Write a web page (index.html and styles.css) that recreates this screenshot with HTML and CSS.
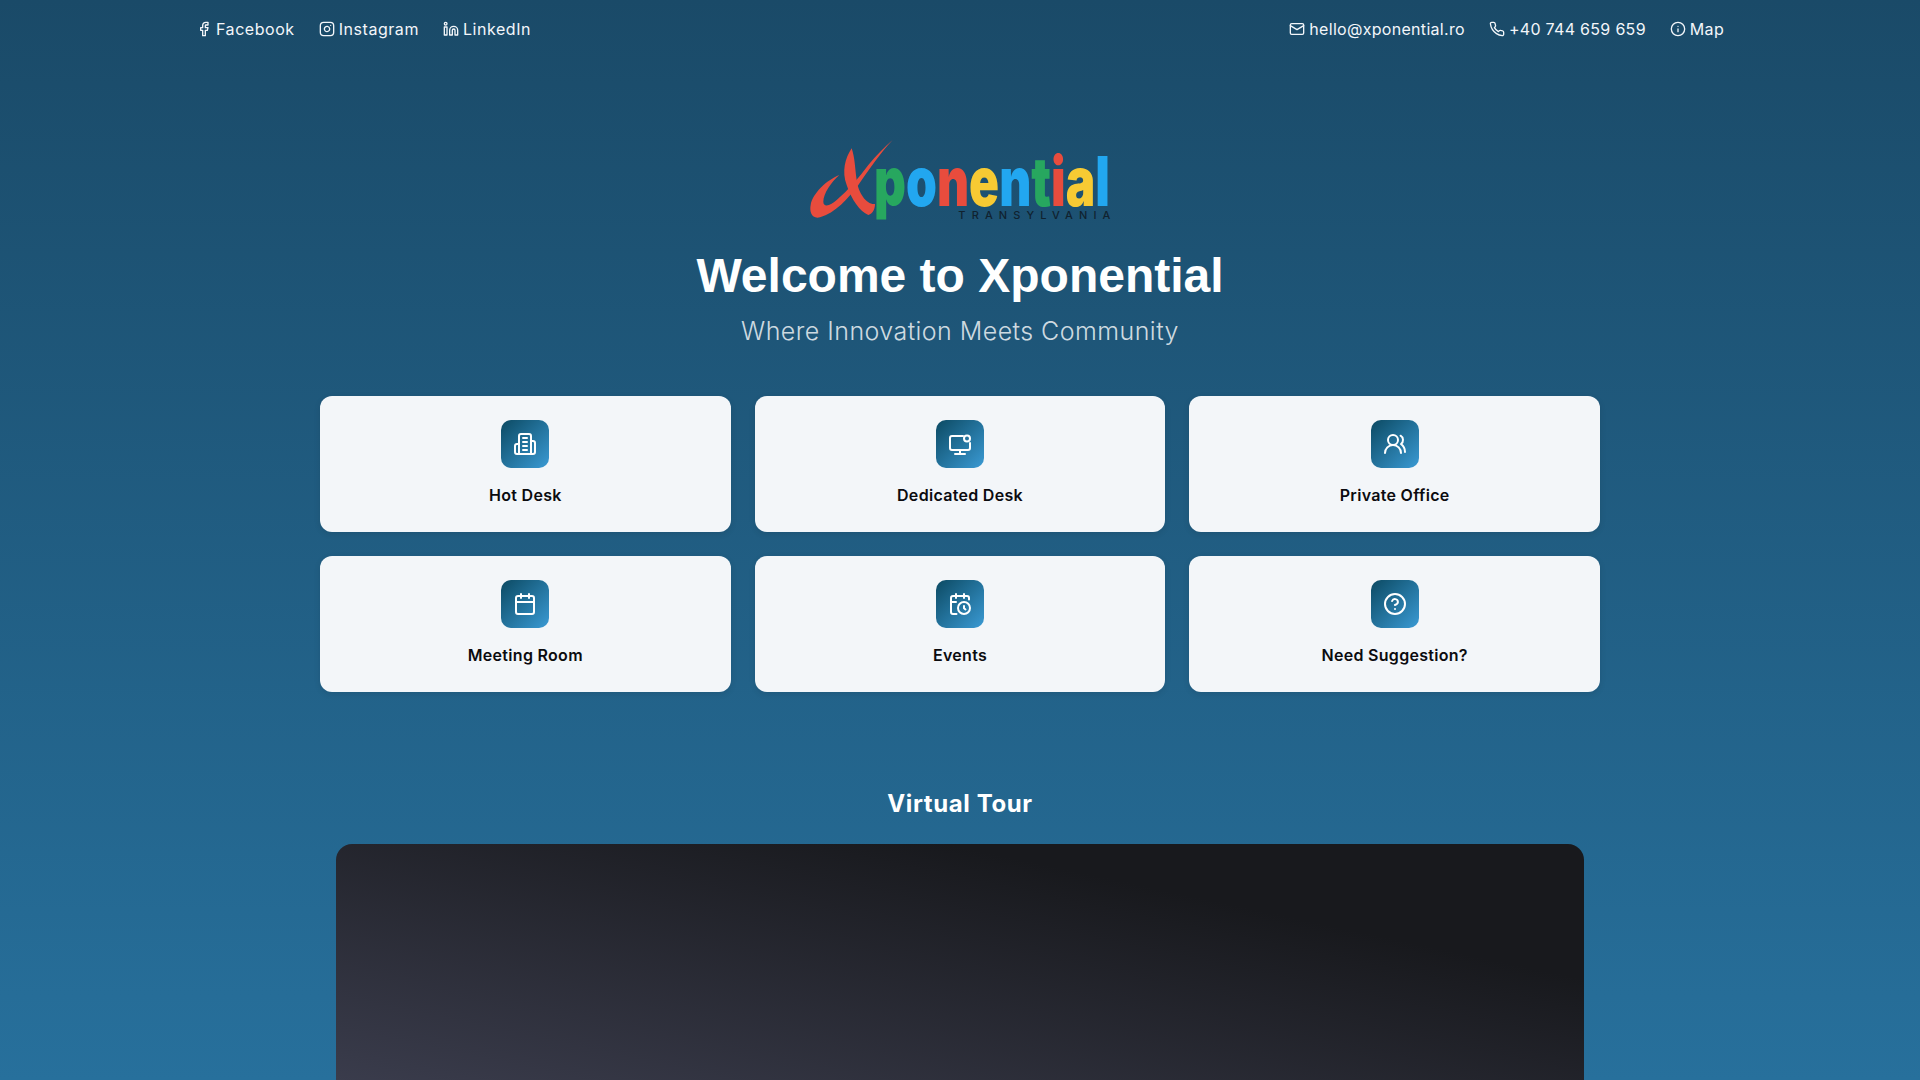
FILE: index.html
```html
<!DOCTYPE html>
<html lang="en">
<head>
    <meta charset="UTF-8">
    <meta name="viewport" content="width=device-width, initial-scale=1.0">
    <title>Xponential Transylvania</title>
    <link rel="stylesheet" href="styles.css">
</head>
<body>
    <header class="topbar">
        <nav class="topbar-group topbar-social">
            <a class="toplink" href="#">
                <svg class="toplink-icon" viewBox="0 0 24 24"><path d="M18 2h-3a5 5 0 0 0-5 5v3H7v4h3v8h4v-8h3l1-4h-4V7a1 1 0 0 1 1-1h3z"/></svg>
                Facebook
            </a>
            <a class="toplink" href="#">
                <svg class="toplink-icon" viewBox="0 0 24 24"><rect x="2" y="2" width="20" height="20" rx="5"/><path d="M16 11.4A4 4 0 1 1 12.6 8 4 4 0 0 1 16 11.4z"/><path d="M17.5 6.5h.01"/></svg>
                Instagram
            </a>
            <a class="toplink" href="#">
                <svg class="toplink-icon" viewBox="0 0 24 24"><path d="M16 8a6 6 0 0 1 6 6v7h-4v-7a2 2 0 0 0-4 0v7h-4v-7a6 6 0 0 1 6-6z"/><rect x="2" y="9" width="4" height="12"/><circle cx="4" cy="4" r="2"/></svg>
                LinkedIn
            </a>
        </nav>
        <nav class="topbar-group">
            <a class="toplink" href="#">
                <svg class="toplink-icon" viewBox="0 0 24 24"><rect x="2" y="4" width="20" height="16" rx="2"/><path d="m22 7-10 6L2 7"/></svg>
                hello@xponential.ro
            </a>
            <a class="toplink" href="#">
                <svg class="toplink-icon" viewBox="0 0 24 24"><path d="M22 16.9v3a2 2 0 0 1-2.2 2 19.8 19.8 0 0 1-8.6-3 19.5 19.5 0 0 1-6-6 19.8 19.8 0 0 1-3.1-8.7A2 2 0 0 1 4.1 2h3a2 2 0 0 1 2 1.7c.1 1 .4 1.9.7 2.8a2 2 0 0 1-.5 2.1L8.1 9.9a16 16 0 0 0 6 6l1.3-1.3a2 2 0 0 1 2.1-.4c.9.3 1.8.6 2.8.7a2 2 0 0 1 1.7 2z"/></svg>
                +40 744 659 659
            </a>
            <a class="toplink" href="#">
                <svg class="toplink-icon" viewBox="0 0 24 24"><circle cx="12" cy="12" r="10"/><path d="M12 16v-4"/><path d="M12 8h.01"/></svg>
                Map
            </a>
        </nav>
    </header>

    <main class="main">
        <section class="hero">
            <svg class="logo" viewBox="0 0 1020 300" role="img" aria-label="Xponential Transylvania">
                <path class="logo-x" d="M308 30C270 70 240 115 205 165C175 205 135 250 90 262C65 268 58 245 62 225C68 190 110 150 148 135C125 155 100 190 100 215C100 235 125 225 140 210C175 180 205 145 235 105C260 75 285 50 308 30Z"/>
                <path class="logo-x" d="M185 55C165 85 155 125 170 165C185 210 210 245 235 255C250 250 255 235 255 222C230 225 205 190 200 150C195 115 195 85 185 55Z"/>
                <text class="logo-word" x="252" y="227" textLength="708" lengthAdjust="spacingAndGlyphs"><tspan class="logo-green">p</tspan><tspan class="logo-blue">o</tspan><tspan class="logo-red">n</tspan><tspan class="logo-yellow">e</tspan><tspan class="logo-blue">n</tspan><tspan class="logo-green">t</tspan><tspan class="logo-red">i</tspan><tspan class="logo-yellow">a</tspan><tspan class="logo-blue">l</tspan></text>
                <text class="logo-sub" x="505" y="268" textLength="456">TRANSYLVANIA</text>
            </svg>
            <h1 class="hero-title">Welcome to Xponential</h1>
            <p class="hero-sub">Where Innovation Meets Community</p>
        </section>

        <section class="cards">
            <a class="card" href="#">
                <span class="card-icon">
                    <svg viewBox="0 0 24 24"><path d="M6 22V4a2 2 0 0 1 2-2h8a2 2 0 0 1 2 2v18z"/><path d="M6 12H4a2 2 0 0 0-2 2v6a2 2 0 0 0 2 2h2"/><path d="M18 9h2a2 2 0 0 1 2 2v9a2 2 0 0 1-2 2h-2"/><path d="M10 6h4"/><path d="M10 10h4"/><path d="M10 14h4"/><path d="M10 18h4"/></svg>
                </span>
                <span class="card-label">Hot Desk</span>
            </a>
            <a class="card" href="#">
                <span class="card-icon">
                    <svg viewBox="0 0 24 24"><path d="M15 4H4a2 2 0 0 0-2 2v10a2 2 0 0 0 2 2h16a2 2 0 0 0 2-2v-5"/><circle cx="19" cy="6.5" r="3"/><path d="M7 22h10"/><path d="M12 18v4"/></svg>
                </span>
                <span class="card-label">Dedicated Desk</span>
            </a>
            <a class="card" href="#">
                <span class="card-icon">
                    <svg viewBox="0 0 24 24"><path d="M18 21a8 8 0 0 0-16 0"/><circle cx="10" cy="8" r="5"/><path d="M22 20c0-3.37-2-6.5-4-8a5 5 0 0 0-.45-8.3"/></svg>
                </span>
                <span class="card-label">Private Office</span>
            </a>
            <a class="card" href="#">
                <span class="card-icon">
                    <svg viewBox="0 0 24 24"><path d="M8 2v4"/><path d="M16 2v4"/><rect x="3" y="4" width="18" height="18" rx="2"/><path d="M3 10h18"/></svg>
                </span>
                <span class="card-label">Meeting Room</span>
            </a>
            <a class="card" href="#">
                <span class="card-icon">
                    <svg viewBox="0 0 24 24"><path d="M21 7.5V6a2 2 0 0 0-2-2H5a2 2 0 0 0-2 2v14a2 2 0 0 0 2 2h3.5"/><path d="M16 2v4"/><path d="M8 2v4"/><path d="M3 10h5"/><path d="M17.5 17.5 16 16.3V14"/><circle cx="16" cy="16" r="6"/></svg>
                </span>
                <span class="card-label">Events</span>
            </a>
            <a class="card" href="#">
                <span class="card-icon">
                    <svg viewBox="0 0 24 24"><circle cx="12" cy="12" r="10"/><path d="M9.1 9a3 3 0 0 1 5.8 1c0 2-3 3-3 3"/><path d="M12 17h.01"/></svg>
                </span>
                <span class="card-label">Need Suggestion?</span>
            </a>
        </section>

        <section class="tour">
            <h2 class="tour-title">Virtual Tour</h2>
            <div class="tour-video"></div>
        </section>
    </main>
</body>
</html>
```

FILE: styles.css
```css
html, body {
    height: 100%;
    overflow: hidden;
}
body {
    font-family: Inter, "Noto Sans", sans-serif;
    margin: 0;
    padding: 0;
    color: #fff;
    background: linear-gradient(180deg, #1a4a68 0%, #27709c 100%);
}
a {
    color: inherit;
    text-decoration: none;
}

.topbar {
    width: 1528px;
    margin: 0 auto;
    padding: 17px 0 0;
    display: flex;
    justify-content: space-between;
}
.topbar-group {
    display: flex;
    gap: 24px;
    letter-spacing: 0.3px;
}
.topbar-social {
    letter-spacing: 0.55px;
}
.toplink {
    display: flex;
    align-items: center;
    gap: 4px;
    height: 24px;
    font-size: 16px;
    color: #f3f6fa;
}
.toplink-icon {
    width: 16px;
    height: 16px;
    fill: none;
    stroke: currentColor;
    stroke-width: 2;
    stroke-linecap: round;
    stroke-linejoin: round;
}

.main {
    display: flex;
    flex-direction: column;
    align-items: center;
}

.hero {
    display: flex;
    flex-direction: column;
    align-items: center;
    margin-top: 89px;
}
.logo {
    display: block;
    width: 340px;
    height: 100px;
    margin-bottom: 18px;
}
.logo-x { fill: #e84c3d; }
.logo-word {
    font-family: Inter, sans-serif;
    font-size: 205px;
    font-weight: 900;
}
.logo-green { fill: #27a75f; }
.logo-blue { fill: #22a7f0; }
.logo-red { fill: #e84c3d; }
.logo-yellow { fill: #f7ca33; }
.logo-sub {
    font-family: Inter, sans-serif;
    font-size: 33px;
    font-weight: 500;
    fill: #10222f;
}
.hero-title {
    margin: 0;
    font-family: "Liberation Sans", Arial, sans-serif;
    font-size: 48px;
    font-weight: 700;
    line-height: 56px;
}
.hero-sub {
    margin: 11px 0 0;
    font-size: 25px;
    font-weight: 300;
    line-height: 32px;
    letter-spacing: 0.45px;
    color: rgba(255, 255, 255, 0.8);
}

.cards {
    width: 1280px;
    margin-top: 49px;
    display: grid;
    grid-template-columns: repeat(3, 1fr);
    gap: 24px;
}
.card {
    display: flex;
    flex-direction: column;
    align-items: center;
    gap: 15px;
    padding: 24px 24px 25px;
    background-color: #f3f6f9;
    border-radius: 12px;
    box-shadow: 0 2px 6px rgba(0, 0, 0, 0.1);
}
.card-icon {
    width: 48px;
    height: 48px;
    display: flex;
    align-items: center;
    justify-content: center;
    border-radius: 10px;
    background: linear-gradient(135deg, #0c4a63 0%, #3a9ad4 100%);
}
.card-icon svg {
    width: 24px;
    height: 24px;
    fill: none;
    stroke: #fff;
    stroke-width: 2;
    stroke-linecap: round;
    stroke-linejoin: round;
}
.card-label {
    font-size: 16px;
    font-weight: 600;
    line-height: 24px;
    letter-spacing: 0.3px;
    color: #0b0b0f;
}

.tour {
    display: flex;
    flex-direction: column;
    align-items: center;
    margin-top: 95px;
}
.tour-title {
    margin: 0 0 23px;
    font-size: 24px;
    font-weight: 700;
    line-height: 34px;
    letter-spacing: 0.6px;
}
.tour-video {
    width: 1248px;
    height: 702px;
    border-radius: 16px;
    background: linear-gradient(192deg, #18191d 14%, #3a3c4c 52%);
}
```
